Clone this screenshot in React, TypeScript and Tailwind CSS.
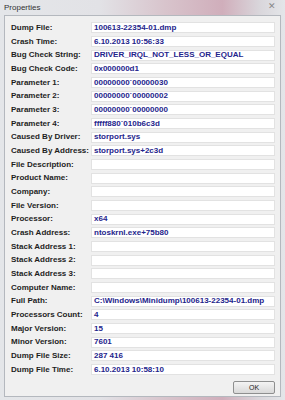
const ROWS: [string, string][] = [
  ["Dump File:", "100613-22354-01.dmp"],
  ["Crash Time:", "6.10.2013 10:56:33"],
  ["Bug Check String:", "DRIVER_IRQL_NOT_LESS_OR_EQUAL"],
  ["Bug Check Code:", "0x000000d1"],
  ["Parameter 1:", "00000000`00000030"],
  ["Parameter 2:", "00000000`00000002"],
  ["Parameter 3:", "00000000`00000000"],
  ["Parameter 4:", "fffff880`010b6c3d"],
  ["Caused By Driver:", "storport.sys"],
  ["Caused By Address:", "storport.sys+2c3d"],
  ["File Description:", ""],
  ["Product Name:", ""],
  ["Company:", ""],
  ["File Version:", ""],
  ["Processor:", "x64"],
  ["Crash Address:", "ntoskrnl.exe+75b80"],
  ["Stack Address 1:", ""],
  ["Stack Address 2:", ""],
  ["Stack Address 3:", ""],
  ["Computer Name:", ""],
  ["Full Path:", "C:\\Windows\\Minidump\\100613-22354-01.dmp"],
  ["Processors Count:", "4"],
  ["Major Version:", "15"],
  ["Minor Version:", "7601"],
  ["Dump File Size:", "287 416"],
  ["Dump File Time:", "6.10.2013 10:58:10"],
];

export default function App() {
  return (
    <div
      className="relative w-[285px] h-[400px] overflow-hidden bg-[linear-gradient(90deg,#e4e6e9_0%,#e2e2e6_35%,#d8c4cc_58%,#d0aebb_78%,#d9d6db_91%,#e4e6e9_100%)]"
      style={{ fontFamily: '"Liberation Sans", Arial, sans-serif' }}
    >
      <div className="h-[15px] flex items-center pl-[4px] text-[8px] text-[#333]">
        Properties
      </div>
      <div className="absolute right-[6px] top-[1px] w-[14px] h-[11px] flex items-center justify-center text-[9px] leading-none text-[#888]">
        ✕
      </div>

      <div className="mx-[4px] h-[382px] bg-[#f0f0f0] border border-[#b4b8be] flex flex-col">
        <div className="pt-[5px] pl-[6px] pr-[5px] flex flex-col">
          {ROWS.map(([label, value]) => (
            <div key={label} className="h-[13.68px] flex items-center">
              <div className="w-[80px] shrink-0 text-[8px] font-bold text-[#1e1e1e] leading-none whitespace-nowrap">
                {label}
              </div>
              <div className="flex-1 h-[11px] bg-white border border-[#e2e2e2] flex items-center pl-[2px] text-[8px] font-bold text-[#24248c] leading-none whitespace-nowrap overflow-hidden">
                {value}
              </div>
            </div>
          ))}
        </div>
        <div className="flex justify-end pr-[5px] mt-[5px]">
          <div className="w-[42px] h-[13px] rounded-[2px] border border-[#8e8f8f] bg-[linear-gradient(#f4f4f4,#e6e6e6_50%,#d9d9d9)] flex items-center justify-center text-[7px] text-[#222]">
            OK
          </div>
        </div>
      </div>
    </div>
  );
}
